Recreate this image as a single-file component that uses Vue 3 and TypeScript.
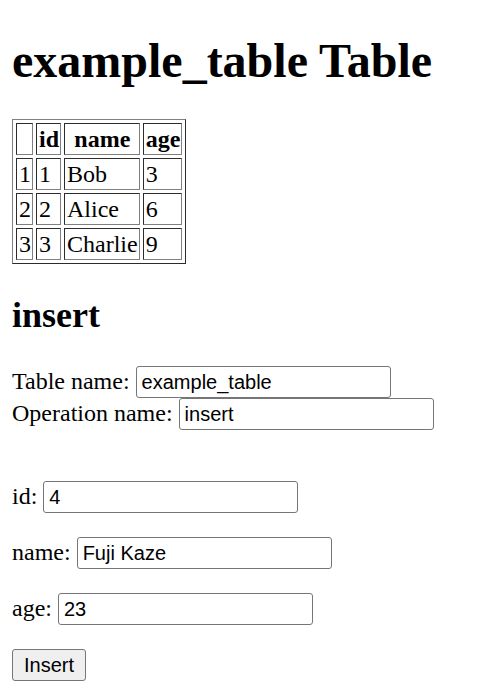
<script setup lang="ts">
import { reactive, ref } from 'vue'

interface Row {
  id: number
  name: string
  age: number
}

const rows = ref<Row[]>([
  { id: 1, name: 'Bob', age: 3 },
  { id: 2, name: 'Alice', age: 6 },
  { id: 3, name: 'Charlie', age: 9 },
])

const target = reactive({ table: 'example_table', operation: 'insert' })
const draft = reactive({ id: '4', name: 'Fuji Kaze', age: '23' })

function insertRow(): void {
  rows.value.push({ id: Number(draft.id), name: draft.name, age: Number(draft.age) })
}
</script>

<template>
  <main class="page">
    <h1>example_table Table</h1>

    <table>
      <thead>
        <tr>
          <th></th>
          <th scope="col">id</th>
          <th scope="col">name</th>
          <th scope="col">age</th>
        </tr>
      </thead>
      <tbody>
        <tr v-for="(row, index) in rows" :key="index">
          <td>{{ index + 1 }}</td>
          <td>{{ row.id }}</td>
          <td>{{ row.name }}</td>
          <td>{{ row.age }}</td>
        </tr>
      </tbody>
    </table>

    <h2>insert</h2>

    <form @submit.prevent="insertRow">
      <div class="target">
        <div class="field">
          <label for="table-name">Table name:</label>
          <input id="table-name" v-model="target.table" type="text" />
        </div>
        <div class="field">
          <label for="operation-name">Operation name:</label>
          <input id="operation-name" v-model="target.operation" type="text" />
        </div>
      </div>
      <div class="values">
        <div class="field">
          <label for="row-id">id:</label>
          <input id="row-id" v-model="draft.id" type="text" />
        </div>
        <div class="field">
          <label for="row-name">name:</label>
          <input id="row-name" v-model="draft.name" type="text" />
        </div>
        <div class="field">
          <label for="row-age">age:</label>
          <input id="row-age" v-model="draft.age" type="text" />
        </div>
        <button type="submit">Insert</button>
      </div>
    </form>
  </main>
</template>

<style>
body {
  background: #fff;
}
</style>

<style scoped>
.page {
  padding: 32px 12px 12px;
  color: #000;
  font-family: 'Liberation Serif', 'Times New Roman', serif;
  font-size: 24px;
  line-height: 30px;
}

h1 {
  margin: 0 0 30px;
  font-size: 48px;
  line-height: 57px;
}

h2 {
  margin: 30px 0;
  font-size: 36px;
  line-height: 42px;
}

table {
  border: 1px solid;
  border-color: #808080 #2c2c2c #2c2c2c #808080;
  border-collapse: separate;
  border-spacing: 3px;
}

th,
td {
  padding: 0 1px 0 2px;
  border: 1px solid;
  border-color: #2c2c2c #808080 #808080 #2c2c2c;
}

td {
  text-align: left;
}

.field {
  display: flex;
  align-items: flex-start;
  gap: 6px;
}

.values {
  display: flex;
  flex-direction: column;
  align-items: flex-start;
  gap: 24px;
  margin-top: 51px;
}

input,
button {
  box-sizing: border-box;
  height: 32px;
  margin: 0;
  border: 1px solid #767676;
  border-radius: 3px;
  color: #000;
  font-family: 'Liberation Sans', Arial, sans-serif;
  font-size: 20px;
}

input {
  width: 255px;
  padding: 0 5px;
  background: #fff;
}

button {
  padding: 0 11px;
  background: #efefef;
}
</style>
